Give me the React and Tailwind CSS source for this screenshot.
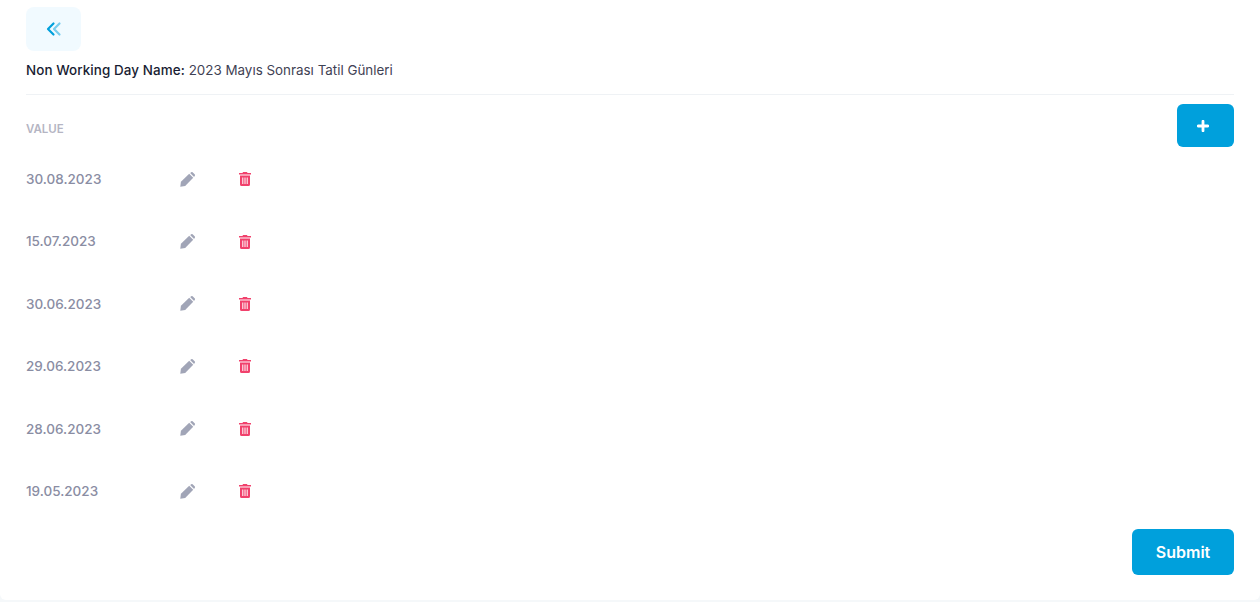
import React from 'react'

const dates = ['30.08.2023', '15.07.2023', '30.06.2023', '29.06.2023', '28.06.2023', '19.05.2023']

function BackIcon() {
  return (
    <svg width="18" height="18" viewBox="0 0 18 18" fill="none" strokeWidth="2.200" strokeLinecap="round" strokeLinejoin="round">
      <path d="M14.500 3.500 9 9l5.500 5.500" stroke="#00a0dc" strokeOpacity="0.5" />
      <path d="M8.500 3.500 3 9l5.500 5.500" stroke="#00a0dc" />
    </svg>
  )
}

function PenIcon() {
  return (
    <svg width="15" height="15" viewBox="0 0 16 16" fill="#a1a5b7">
      <path d="M.3 15.700 1 10.500 9.800 1.900 14.100 6.200 5.500 15Z" />
      <path d="M10.800 1 11.700.4a1.500 1.500 0 0 1 2 0l1.900 1.900a1.500 1.500 0 0 1 0 2l-.6.900Z" />
    </svg>
  )
}

function TrashIcon() {
  return (
    <svg width="12" height="14" viewBox="0 0 12 14" fill="#f1416c">
      <path d="M4 0h4l.5 1H12v1.600H0V1h3.500Z" />
      <path fillRule="evenodd" d="M1 3.500h10V12.500A1.500 1.500 0 0 1 9.500 14h-7A1.500 1.500 0 0 1 1 12.500ZM3.300 5.500V12h1V5.500ZM5.500 5.500V12h1V5.500ZM7.700 5.500V12h1V5.500Z" />
    </svg>
  )
}

export default function App() {
  return (
    <div className="w-[1260px] h-[602px] bg-[#f5f8fa] overflow-hidden font-['Inter','Liberation_Sans',sans-serif]">
      <div className="h-[600px] bg-white rounded-b-md pl-[26px] pr-[26px] pt-[7px]">
        <button className="w-[55px] h-[44px] bg-[#f1faff] rounded-lg flex items-center justify-center">
          <BackIcon />
        </button>
        <div className="mt-[10px] h-[18px] leading-[18px] text-[13.400px] text-[#181c32] whitespace-nowrap">
          <span className="font-medium tracking-[0.1px]">Non Working Day Name:</span> <span className="text-[#3f4254]">2023 Mayıs Sonrası Tatil Günleri</span>
        </div>
        <div className="mt-[15px] border-t border-[#eff2f5]" />
        <div className="mt-[9px] flex items-start justify-between">
          <div className="mt-[19px] text-[11.500px] leading-[12px] font-semibold text-[#b5b5c3]">VALUE</div>
          <button className="w-[57px] h-[43px] pr-[5px] bg-[#00a0dc] rounded-md flex items-center justify-center">
            <svg width="12" height="12" viewBox="0 0 12 12" fill="none" stroke="#fff" strokeWidth="2.800" strokeLinecap="round">
              <path d="M6 1.200v9.600M1.200 6h9.600" />
            </svg>
          </button>
        </div>
        <div className="mt-[1px]">
          {dates.map(d => (
            <div key={d} className="h-[62.400px] flex items-center">
              <div className="w-[154px] text-[13.500px] font-medium text-[#8a8da3]">{d}</div>
              <div className="w-[59px]"><PenIcon /></div>
              <TrashIcon />
            </div>
          ))}
        </div>
        <div className="mt-[7px] flex justify-end">
          <button className="w-[102px] h-[46px] bg-[#00a0dc] rounded-md text-white text-[16px] font-semibold">Submit</button>
        </div>
      </div>
    </div>
  )
}
